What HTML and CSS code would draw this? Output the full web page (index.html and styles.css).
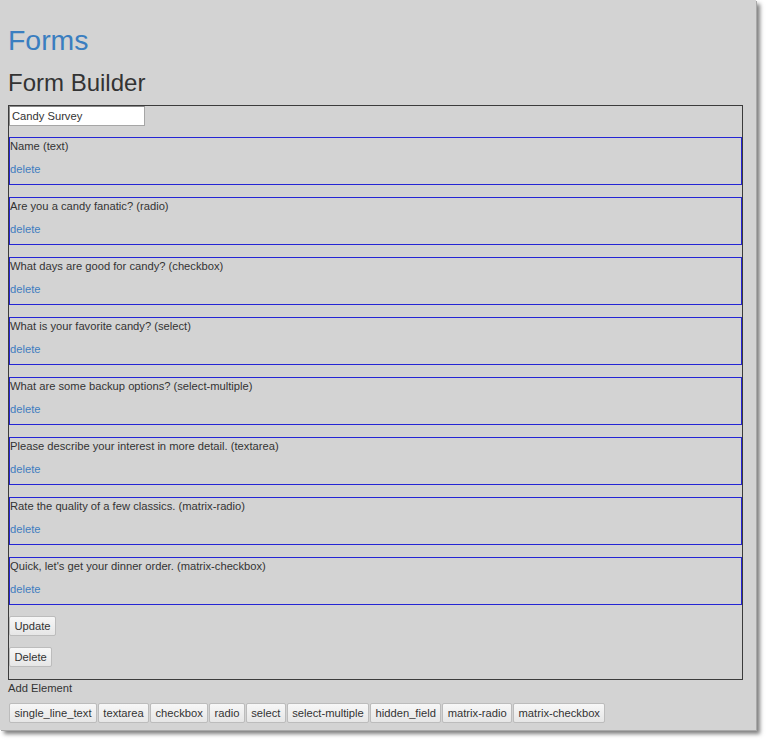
FILE: index.html
```html
<!DOCTYPE html>
<html lang="en">
<head>
<meta charset="utf-8">
<title>Forms</title>
<link rel="stylesheet" href="styles.css">
</head>
<body>
<div class="window">
  <h1 class="page-title">Forms</h1>
  <h2 class="section-title">Form Builder</h2>
  <div class="builder">
    <input class="title-input" type="text" value="Candy Survey">
    <div class="fields">
      <div class="field"><div class="field-label">Name (text)</div><a class="field-delete" href="#">delete</a></div>
      <div class="field"><div class="field-label">Are you a candy fanatic? (radio)</div><a class="field-delete" href="#">delete</a></div>
      <div class="field"><div class="field-label">What days are good for candy? (checkbox)</div><a class="field-delete" href="#">delete</a></div>
      <div class="field"><div class="field-label">What is your favorite candy? (select)</div><a class="field-delete" href="#">delete</a></div>
      <div class="field"><div class="field-label">What are some backup options? (select-multiple)</div><a class="field-delete" href="#">delete</a></div>
      <div class="field"><div class="field-label">Please describe your interest in more detail. (textarea)</div><a class="field-delete" href="#">delete</a></div>
      <div class="field"><div class="field-label">Rate the quality of a few classics. (matrix-radio)</div><a class="field-delete" href="#">delete</a></div>
      <div class="field"><div class="field-label">Quick, let's get your dinner order. (matrix-checkbox)</div><a class="field-delete" href="#">delete</a></div>
    </div>
    <div class="actions">
      <button class="btn" type="button">Update</button>
      <button class="btn" type="button">Delete</button>
    </div>
  </div>
  <div class="add-label">Add Element</div>
  <div class="element-bar">
    <button class="btn" type="button">single_line_text</button>
    <button class="btn" type="button">textarea</button>
    <button class="btn" type="button">checkbox</button>
    <button class="btn" type="button">radio</button>
    <button class="btn" type="button">select</button>
    <button class="btn" type="button">select-multiple</button>
    <button class="btn" type="button">hidden_field</button>
    <button class="btn" type="button">matrix-radio</button>
    <button class="btn" type="button">matrix-checkbox</button>
  </div>
</div>
</body>
</html>
```
FILE: styles.css
```css
html, body {
  margin: 0;
  padding: 0;
  background: #ffffff;
}
body {
  min-height: 742px;
  font-family: "Liberation Sans", Arial, sans-serif;
  font-size: 11.2px;
  line-height: 16px;
  color: #333333;
}
.window {
  box-sizing: border-box;
  width: 756px;
  height: 730px;
  padding: 25px 8px 0;
  background: #d3d3d3;
  box-shadow: 1px 1px 0 #a8a8a8, 4px 4px 4px rgba(0, 0, 0, 0.5);
  display: flow-root;
  overflow: hidden;
}
.page-title {
  margin: 0;
  font-size: 28.4px;
  line-height: 31.68px;
  font-weight: normal;
  color: #3a7ec0;
}
.section-title {
  margin: 13.6px 0 8px;
  font-size: 24px;
  line-height: 26.4px;
  font-weight: normal;
  color: #333333;
}
.builder {
  box-sizing: border-box;
  width: 735px;
  border: 1px solid #3c3c3c;
  padding: 0 0 12px;
}
.title-input {
  display: block;
  box-sizing: border-box;
  width: 136px;
  height: 20px;
  margin: 0;
  padding: 0 2px;
  border: 1px solid #a6a6a6;
  border-top-color: #8a8a8a;
  border-left-color: #8a8a8a;
  background: #ffffff;
  font-family: "Liberation Sans", Arial, sans-serif;
  font-size: 11.2px;
  color: #333333;
}
.fields {
  display: flex;
  flex-direction: column;
  gap: 12px;
  margin-top: 11px;
}
.field {
  border: 1px solid #2424d4;
}
.field-label {
  line-height: 16px;
}
.field-delete {
  display: block;
  margin: 7px 0;
  line-height: 16px;
  color: #3f7dbf;
  text-decoration: none;
}
.actions {
  display: flex;
  flex-direction: column;
  align-items: flex-start;
  gap: 11px;
  margin-top: 11px;
}
.btn {
  box-sizing: border-box;
  height: 20px;
  margin: 0;
  padding: 0 4.4px;
  border: 1px solid #bcbcbc;
  border-radius: 2px;
  background: linear-gradient(#f7f7f7, #e6e6e6);
  font-family: "Liberation Sans", Arial, sans-serif;
  font-size: 11.2px;
  line-height: 18px;
  color: #333333;
}
.add-label {
  line-height: 16px;
}
.element-bar {
  display: flex;
  gap: 1px;
  margin-top: 7px;
  padding-left: 1px;
}
```
